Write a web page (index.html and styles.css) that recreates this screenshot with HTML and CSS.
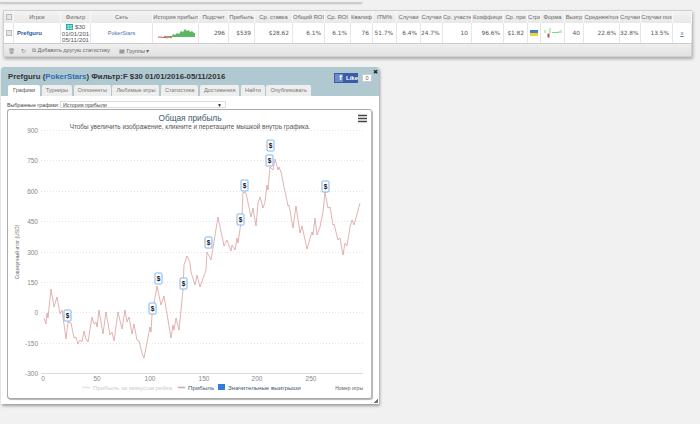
FILE: index.html
```html
<!DOCTYPE html>
<html lang="ru">
<head>
    <meta charset="UTF-8">
    <title>Prefguru - PokerStars</title>
    <link rel="stylesheet" href="styles.css">
</head>
<body>
    <div class="top-strip"></div>

    <div class="stats-panel">
        <div class="stats-row stats-head">
            <div class="cell cell-check"><span class="checkbox"></span></div>
            <div class="cell">Игрок</div>
            <div class="cell">Фильтр</div>
            <div class="cell">Сеть</div>
            <div class="cell">История прибыл</div>
            <div class="cell">Подсчет</div>
            <div class="cell">Прибыль</div>
            <div class="cell">Ср. ставка</div>
            <div class="cell">Общий ROI</div>
            <div class="cell">Ср. ROI</div>
            <div class="cell">Квалиф</div>
            <div class="cell">ITM%</div>
            <div class="cell">Случаи</div>
            <div class="cell">Случаи</div>
            <div class="cell">Ср. участн</div>
            <div class="cell">Коэффици</div>
            <div class="cell">Ср. при</div>
            <div class="cell">Стра</div>
            <div class="cell">Форма</div>
            <div class="cell">Выигр</div>
            <div class="cell">Средняя/поз</div>
            <div class="cell">Случаи</div>
            <div class="cell">Случаи поз</div>
            <div class="cell"></div>
        </div>
        <div class="stats-row stats-body">
            <div class="cell cell-check"><span class="checkbox"></span></div>
            <div class="cell cell-player">Prefguru</div>
            <div class="cell cell-filter"><span class="filter-tag">$$</span> $30<br>01/01/201<br>05/11/201</div>
            <div class="cell cell-network">PokerStars</div>
            <div class="cell cell-spark">
                <svg width="38" height="14" viewBox="0 0 38 14">
                    <path d="M7 11 L7 10 L15 10 L16 8 L18 9 L20 7 L22 8 L24 5 L26 6 L28 3 L30 5 L32 4 L33 6 L35 5 L37 7 L38 7 L38 11 Z" fill="#5cb860"/>
                    <path d="M1 11 L8 11.500 L10 12 L12 11 L15 12" fill="none" stroke="#d9534f" stroke-width="1"/>
                </svg>
            </div>
            <div class="cell cell-num">296</div>
            <div class="cell cell-num">$539</div>
            <div class="cell cell-num">$28.62</div>
            <div class="cell cell-num">6.1%</div>
            <div class="cell cell-num">6.1%</div>
            <div class="cell cell-num">76</div>
            <div class="cell cell-num">51.7%</div>
            <div class="cell cell-num">6.4%</div>
            <div class="cell cell-num">24.7%</div>
            <div class="cell cell-num">10</div>
            <div class="cell cell-num">96.6%</div>
            <div class="cell cell-num">$1.82</div>
            <div class="cell cell-flag"><span class="flag"></span></div>
            <div class="cell cell-form">
                <svg width="20" height="12" viewBox="0 0 20 12">
                    <path d="M2 3v3M7 1v5M16 4v2M18 3v3" stroke="#7be07b" stroke-width="1"/>
                    <path d="M9 5.500H16" stroke="#7be07b" stroke-width="1"/>
                    <path d="M5.500 6.500v4" stroke="#c0504d" stroke-width="2"/>
                </svg>
            </div>
            <div class="cell cell-num">40</div>
            <div class="cell cell-num">22.6%</div>
            <div class="cell cell-num">32.8%</div>
            <div class="cell cell-num">13.5%</div>
            <div class="cell cell-more">x</div>
        </div>
        <div class="stats-foot">
            <span class="foot-icon">&#128465;</span>
            <span class="foot-icon">&#8635;</span>
            <span>&#10697; Добавить другую статистику</span>
            <span class="foot-groups">&#9636; Группы &#9662;</span>
        </div>
    </div>

    <div class="dialog">
        <span class="dialog-close">&#10006;</span>
        <div class="dialog-head">
            <div class="dialog-title">Prefguru (<a href="#">PokerStars</a>) Фильтр:F $30 01/01/2016-05/11/2016</div>
            <div class="fb-like">
                <span class="fb-btn"><b class="fb-logo">f</b><span class="fb-text">Like</span></span>
                <span class="fb-count">0</span>
            </div>
        </div>
        <div class="tabs">
            <div class="tab tab-active">Графики</div>
            <div class="tab">Турниры</div>
            <div class="tab">Оппоненты</div>
            <div class="tab">Любимые игры</div>
            <div class="tab">Статистика</div>
            <div class="tab">Достижения</div>
            <div class="tab">Найти</div>
            <div class="tab">Опубликовать</div>
        </div>
        <div class="dialog-body">
            <div class="graph-select">
                <label>Выбранные графики:</label>
                <div class="select-box"><span>История прибыли</span><span class="select-arrow">&#9660;</span></div>
            </div>
            <div class="chart-box">
                <svg class="chart" width="363" height="288" viewBox="8 110 363 288">
                    <text class="chart-title" x="190" y="121" text-anchor="middle">Общая прибыль</text>
                    <text class="chart-sub" x="190" y="128.500" text-anchor="middle">Чтобы увеличить изображение, кликните и перетащите мышкой внутрь графика.</text>
                    <path d="M358 115.500h9M358 118.500h9M358 121.500h9" stroke="#444" stroke-width="1.500"/>

                    <path class="grid-line" d="M41 130.500H363M41 160.500H363M41 191.500H363M41 221.500H363M41 252.500H363M41 282.500H363M41 312.500H363M41 343.500H363"/>
                    <path d="M41 373.500H363" stroke="#d8dde4" fill="none"/>

                    <g class="axis-y" text-anchor="end">
                        <text x="38" y="133">900</text>
                        <text x="38" y="163">750</text>
                        <text x="38" y="194">600</text>
                        <text x="38" y="224">450</text>
                        <text x="38" y="255">300</text>
                        <text x="38" y="285">150</text>
                        <text x="38" y="315">0</text>
                        <text x="38" y="346">-150</text>
                        <text x="38" y="376">-300</text>
                    </g>
                    <g class="axis-x" text-anchor="middle">
                        <text x="43" y="381">0</text>
                        <text x="97" y="381">50</text>
                        <text x="150" y="381">100</text>
                        <text x="204" y="381">150</text>
                        <text x="257" y="381">200</text>
                        <text x="311" y="381">250</text>
                    </g>
                    <text class="axis-name" transform="translate(19 252) rotate(-90)" text-anchor="middle">Совокупный итог (USD)</text>
                    <text class="axis-name" x="363" y="390" text-anchor="end">Номер игры</text>

                    <polyline class="profit-line" points="44,318 46,324 47,313 48,318 51,289 54,307 57,297 60,314 62,310 66,339 68,322 71,323 74,338 76,337 78,344 80,340 82,342 84,331 86,339 88,342 92,317 94,324 96,322 97,327 99,310 103,334 106,312 110,335 112,332 114,341 118,312 122,329 125,310 127,322 129,317 132,334 134,324 137,340 139,341 142,353 144,358 150,327 151,332 152,315 157,286 161,305 164,296 171,338 173,325 174,330 176,318 179,330 183,290 184,265 187,256 190,263 191,272 195,285 197,275 200,287 206,270 207,252 211,260 218,217 224,246 226,242 227,240 231,251 232,245 235,250 237,238 238,243 242,215 243,192 246,193 251,217 253,208 256,226 258,203 260,197 263,208 265,202 267,185 268,190 270,167 273,170 275,159 278,170 279,167 281,172 288,206 289,205 293,228 296,206 300,233 302,226 307,249 312,232 313,235 315,218 317,235 320,227 323,212 325,192 328,208 330,207 333,225 334,224 338,240 340,238 343,255 345,243 347,246 350,227 352,220 354,225 360,203"/>

                    <g class="win-flag">
                        <rect x="64" y="310" width="7" height="11" rx="1"/><text x="67.500" y="318" text-anchor="middle">$</text>
                        <rect x="149" y="303" width="7" height="11" rx="1"/><text x="152.500" y="311" text-anchor="middle">$</text>
                        <rect x="155" y="273" width="7" height="11" rx="1"/><text x="158.500" y="281" text-anchor="middle">$</text>
                        <rect x="180" y="278" width="7" height="11" rx="1"/><text x="183.500" y="286" text-anchor="middle">$</text>
                        <rect x="205" y="237" width="7" height="11" rx="1"/><text x="208.500" y="245" text-anchor="middle">$</text>
                        <rect x="237" y="214" width="7" height="11" rx="1"/><text x="240.500" y="222" text-anchor="middle">$</text>
                        <rect x="241" y="180" width="7" height="11" rx="1"/><text x="244.500" y="188" text-anchor="middle">$</text>
                        <rect x="266" y="155" width="7" height="11" rx="1"/><text x="269.500" y="163" text-anchor="middle">$</text>
                        <rect x="267" y="140" width="7" height="11" rx="1"/><text x="270.500" y="148" text-anchor="middle">$</text>
                        <rect x="322" y="181" width="7" height="11" rx="1"/><text x="325.500" y="189" text-anchor="middle">$</text>
                    </g>

                    <g class="legend">
                        <path d="M82 387.500h8" stroke="#e3e3e3" stroke-width="1.500"/>
                        <text class="legend-off" x="93" y="389.500">Прибыль за минусом рейка</text>
                        <path d="M178 387.500h7" stroke="#d9a3a3" stroke-width="1.500"/>
                        <text x="188" y="389.500">Прибыль</text>
                        <rect x="218" y="384" width="7" height="6" fill="#2f7ed8"/>
                        <text x="228" y="389.500">Значительные выигрыши</text>
                    </g>
                </svg>
            </div>
        </div>
        <span class="dialog-grip"></span>
    </div>
</body>
</html>
```

FILE: styles.css
```css
* {
    margin: 0;
    padding: 0;
    box-sizing: border-box;
}
body {
    font-family: "Liberation Sans", Arial, sans-serif;
    background: #f1f1f1;
    width: 700px;
    height: 424px;
    overflow: hidden;
    color: #555;
}
.top-strip {
    width: 362px;
    height: 3px;
    background: #f1f1f1;
    border-bottom: 1px solid #c9c9c9;
    box-shadow: 0 1px 2px rgba(0, 0, 0, 0.2);
}
.stats-panel {
    width: 689px;
    height: 47px;
    margin: 7px 0 0 3px;
    background: #e9e9e9;
    border: 1px solid #d0d0d0;
    box-shadow: 1px 2px 3px rgba(0, 0, 0, 0.3);
}
.stats-row {
    display: grid;
    grid-template-columns: 10px 47px 30px 62px 46px 30px 26px 38px 32px 26px 22px 24px 24px 22px 29px 32px 24px 13px 24px 19px 36px 21px 32px 19px;
}
.stats-head {
    height: 12px;
    background: linear-gradient(#f3f3f3, #e8e8e8);
}
.stats-head .cell {
    font-size: 5.800px;
    line-height: 12px;
    text-align: center;
    white-space: nowrap;
    overflow: hidden;
    color: #666;
    border-right: 1px solid #f8f8f8;
}
.stats-body {
    height: 21px;
    background: #fff;
    border-bottom: 1px solid #ccc;
}
.stats-body .cell {
    font-size: 7px;
    line-height: 20px;
    border-right: 1px solid #e6e6e6;
    overflow: hidden;
    color: #555;
}
.cell-check {
    display: flex;
    align-items: center;
    justify-content: center;
}
.checkbox {
    width: 6px;
    height: 6px;
    background: #e6e6e6;
    border: 1px solid #bbb;
}
.stats-body .cell-player {
    padding-left: 3px;
    font-size: 6px;
    font-weight: bold;
    color: #2a5a9e;
}
.stats-body .cell-filter {
    font-size: 6.200px;
    line-height: 6.500px;
    padding-top: 1px;
    text-align: center;
    white-space: nowrap;
}
.filter-tag {
    background: #2ea89a;
    color: #bff;
    font-size: 5px;
    padding: 0 1px;
}
.stats-body .cell-network {
    text-align: center;
    font-size: 5.600px;
    color: #4a72b0;
}
.cell-spark,
.cell-flag,
.cell-form {
    display: flex;
    align-items: center;
    justify-content: center;
}
.stats-body .cell-num {
    text-align: right;
    padding-right: 3px;
    font-family: "DejaVu Sans", sans-serif;
    font-size: 5.800px;
}
.flag {
    width: 8px;
    height: 6px;
    background: linear-gradient(#3f7fd0 50%, #f2d32e 50%);
}
.stats-body .cell-more {
    text-align: center;
    font-size: 6px;
    color: #4a72b0;
    text-decoration: underline;
}
.stats-foot {
    height: 12px;
    display: flex;
    align-items: center;
    gap: 6px;
    padding: 1px 0 0 4px;
    font-size: 5.500px;
    color: #666;
    background: linear-gradient(#efefef, #e2e2e2);
}
.foot-icon {
    color: #888;
}
.foot-groups {
    margin-left: 3px;
}

.dialog {
    position: relative;
    width: 378px;
    height: 337px;
    margin: 10px 0 0 1px;
    background: #fff;
    border-radius: 3px 3px 0 0;
    box-shadow: 1px 2px 3px rgba(0, 0, 0, 0.35);
}
.dialog-close {
    position: absolute;
    top: 1px;
    right: 1px;
    font-size: 6px;
    color: #222;
}
.dialog-head {
    height: 18px;
    display: flex;
    align-items: flex-start;
    justify-content: space-between;
    padding: 5px 7px 0 7px;
    background: #b0c8d0;
    border-radius: 3px 3px 0 0;
}
.dialog-title {
    font-size: 7.800px;
    line-height: 9px;
    font-weight: bold;
    color: #333;
    white-space: nowrap;
}
.dialog-title a {
    color: #2a6db5;
    text-decoration: none;
    font-weight: bold;
}
.fb-like {
    display: flex;
    align-items: center;
    gap: 4px;
    margin-top: 1px;
}
.fb-btn {
    display: flex;
    align-items: center;
    background: #3b5ba8;
    color: #fff;
    font-size: 6px;
    font-weight: bold;
    height: 10px;
    width: 24px;
}
.fb-logo {
    width: 9px;
    height: 8px;
    margin: 0 3px 0 1px;
    background: #6f8cc8;
    text-align: right;
    font-size: 8px;
    line-height: 8px;
    padding-right: 1px;
    overflow: hidden;
}
.fb-count {
    background: #fff;
    border: 1px solid #ccc;
    font-size: 5.500px;
    line-height: 6px;
    width: 10px;
    text-align: center;
}
.tabs {
    display: flex;
    gap: 1.500px;
    height: 11px;
    padding-left: 7px;
    background: #b0c8d0;
}
.tab {
    font-size: 5.600px;
    line-height: 11px;
    padding: 0 4px;
    background: #eeeeee;
    color: #777;
    border-radius: 2px 2px 0 0;
    white-space: nowrap;
}
.tab:first-child {
    padding: 0 5px;
}
.tab-active {
    background: #fff;
    color: #555;
}
.dialog-body {
    padding: 5px 6px 0;
}
.graph-select {
    display: flex;
    align-items: center;
    font-size: 5.300px;
    color: #444;
    height: 7px;
}
.graph-select label {
    width: 53px;
}
.select-box {
    display: flex;
    justify-content: space-between;
    align-items: center;
    width: 166px;
    height: 7px;
    padding: 0 3px 0 2px;
    border: 1px solid #ddd;
}
.select-arrow {
    font-size: 5px;
    color: #222;
}
.chart-box {
    width: 365px;
    height: 290px;
    margin-top: 1px;
    border: 1px solid #aaa;
    border-right-color: #bbb;
    border-radius: 3px;
    box-shadow: 1px 1px 1px rgba(0, 0, 0, 0.3);
}
.chart {
    display: block;
    font-family: "Liberation Sans", Arial, sans-serif;
}
.chart-title {
    font-size: 8.300px;
    fill: #3e576f;
}
.chart-sub {
    font-size: 6.400px;
    fill: #555;
}
.grid-line {
    fill: none;
    stroke: #e6e6e6;
    stroke-dasharray: 1 2;
}
.axis-y text,
.axis-x text {
    font-size: 6.500px;
    fill: #888;
}
.axis-name {
    font-size: 5px;
    fill: #666;
}
.profit-line {
    fill: none;
    stroke: #d9a0a0;
    stroke-width: 0.800;
}
.win-flag rect {
    fill: #fff;
    stroke: #7fb2f0;
    stroke-width: 1;
}
.win-flag text {
    font-size: 6.500px;
    font-weight: bold;
    fill: #111;
}
.legend text {
    font-size: 6.200px;
    fill: #3e576f;
}
.legend .legend-off {
    fill: #ccc;
}
.dialog-grip {
    position: absolute;
    right: 1px;
    bottom: 1px;
    width: 4px;
    height: 4px;
    background: linear-gradient(135deg, transparent 50%, #777 50%);
}
```
